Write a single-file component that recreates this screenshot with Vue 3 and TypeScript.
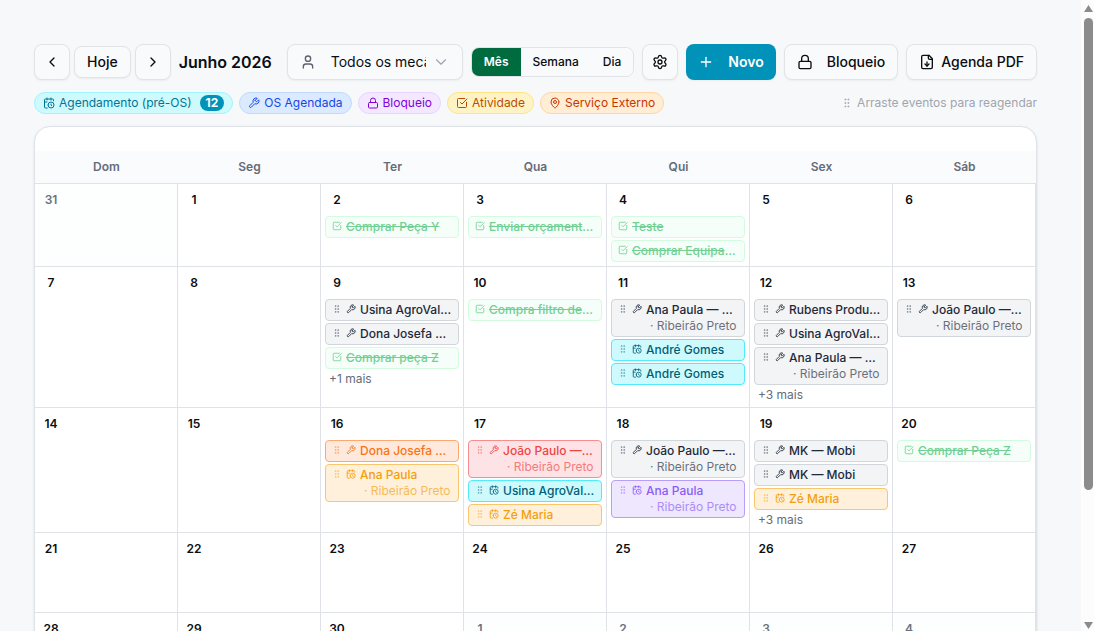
<script setup lang="ts">
import { computed, defineComponent, h, ref } from 'vue'

type IconName =
  | 'left' | 'right' | 'down' | 'user' | 'settings' | 'plus' | 'lock'
  | 'file' | 'calendar' | 'wrench' | 'check' | 'pin' | 'grip'

const paths: Record<IconName, string[]> = {
  left: ['m15 18-6-6 6-6'],
  right: ['m9 18 6-6-6-6'],
  down: ['m6 9 6 6 6-6'],
  user: ['M19 21v-2a4 4 0 0 0-4-4H9a4 4 0 0 0-4 4v2', 'M8 7a4 4 0 1 0 8 0a4 4 0 1 0-8 0'],
  settings: [
    'M9.671 4.136a2.34 2.34 0 0 1 4.659 0 2.34 2.34 0 0 0 3.319 1.915 2.34 2.34 0 0 1 2.33 4.033 2.34 2.34 0 0 0 0 3.831 2.34 2.34 0 0 1-2.33 4.033 2.34 2.34 0 0 0-3.319 1.915 2.34 2.34 0 0 1-4.659 0 2.34 2.34 0 0 0-3.32-1.915 2.34 2.34 0 0 1-2.33-4.033 2.34 2.34 0 0 0 0-3.831A2.34 2.34 0 0 1 6.35 6.051a2.34 2.34 0 0 0 3.319-1.915',
    'M9 12a3 3 0 1 0 6 0a3 3 0 1 0-6 0',
  ],
  plus: ['M5 12h14', 'M12 5v14'],
  lock: ['M5 11h14a2 2 0 0 1 2 2v7a2 2 0 0 1-2 2H5a2 2 0 0 1-2-2v-7a2 2 0 0 1 2-2z', 'M7 11V7a5 5 0 0 1 10 0v4'],
  file: ['M15 2H6a2 2 0 0 0-2 2v16a2 2 0 0 0 2 2h12a2 2 0 0 0 2-2V7Z', 'M14 2v4a2 2 0 0 0 2 2h4', 'M12 18v-6', 'm9 15 3 3 3-3'],
  calendar: ['M21 7.5V6a2 2 0 0 0-2-2H5a2 2 0 0 0-2 2v14a2 2 0 0 0 2 2h3.5', 'M16 2v4', 'M8 2v4', 'M3 10h5', 'M17.5 17.5 16 16.3V14', 'M10 16a6 6 0 1 0 12 0a6 6 0 1 0-12 0'],
  wrench: ['M14.7 6.3a1 1 0 0 0 0 1.4l1.6 1.6a1 1 0 0 0 1.4 0l3.77-3.77a6 6 0 0 1-7.94 7.94l-6.91 6.91a2.12 2.12 0 0 1-3-3l6.91-6.91a6 6 0 0 1 7.94-7.94l-3.76 3.76z'],
  check: ['M21 10.5V19a2 2 0 0 1-2 2H5a2 2 0 0 1-2-2V5a2 2 0 0 1 2-2h12.5', 'm9 11 3 3L22 4'],
  pin: ['M20 10c0 4.993-5.539 10.193-7.399 11.799a1 1 0 0 1-1.202 0C9.539 20.193 4 14.993 4 10a8 8 0 0 1 16 0', 'M9 10a3 3 0 1 0 6 0a3 3 0 1 0-6 0'],
  grip: [5, 12, 19].flatMap((y) => [9, 15].map((x) => `M${x - 1} ${y}a1 1 0 1 0 2 0a1 1 0 1 0-2 0`)),
}

const Icon = defineComponent({
  props: { name: { type: String, required: true }, size: { type: Number, default: 16 }, stroke: { type: Number, default: 2 } },
  setup(props) {
    return () =>
      h('svg', {
        width: props.size, height: props.size, viewBox: '0 0 24 24', fill: 'none', stroke: 'currentColor',
        'stroke-width': props.stroke, 'stroke-linecap': 'round', 'stroke-linejoin': 'round', 'aria-hidden': 'true',
      }, paths[props.name as IconName].map((d) => h('path', { d })))
  },
})

type Tone = 'gray' | 'cyan' | 'green' | 'orange' | 'amber' | 'red' | 'violet'
interface CalEvent { title: string; icon: IconName; tone: Tone; city?: string }
interface Day { label: number; outside?: boolean; events: CalEvent[]; more?: number }

const city = 'Ribeirão Preto'
const task = (title: string): CalEvent => ({ title, icon: 'check', tone: 'green' })
const order = (title: string, tone: Tone = 'gray', place?: string): CalEvent => ({ title, icon: 'wrench', tone, city: place })
const booking = (title: string, tone: Tone, place?: string): CalEvent => ({ title, icon: 'calendar', tone, city: place })

const events: Record<number, CalEvent[]> = {
  2: [task('Comprar Peça Y')],
  3: [task('Enviar orçamento cliente')],
  4: [task('Teste'), task('Comprar Equipamento')],
  9: [order('Usina AgroVale — Trator'), order('Dona Josefa — Gol'), task('Comprar peça Z')],
  10: [task('Compra filtro de óleo')],
  11: [order('Ana Paula — Onix', 'gray', city), booking('André Gomes', 'cyan'), booking('André Gomes', 'cyan')],
  12: [order('Rubens Produtor — Hilux'), order('Usina AgroVale — Trator'), order('Ana Paula — Onix', 'gray', city)],
  13: [order('João Paulo — Strada', 'gray', city)],
  16: [order('Dona Josefa — Gol', 'orange'), booking('Ana Paula', 'amber', city)],
  17: [order('João Paulo — Strada', 'red', city), booking('Usina AgroVale — Trator', 'cyan'), booking('Zé Maria', 'amber')],
  18: [order('João Paulo — Strada', 'gray', city), booking('Ana Paula', 'violet', city)],
  19: [order('MK — Mobi'), order('MK — Mobi'), booking('Zé Maria', 'amber')],
  20: [task('Comprar Peça Z')],
}
const hidden: Record<number, number> = { 9: 1, 12: 3, 19: 3 }

const weekdays = ['Dom', 'Seg', 'Ter', 'Qua', 'Qui', 'Sex', 'Sáb']
const weeks = computed<Day[][]>(() =>
  Array.from({ length: 5 }, (_, w) =>
    Array.from({ length: 7 }, (_, d) => {
      const n = w * 7 + d
      if (n === 0) return { label: 31, outside: true, events: [] }
      if (n > 30) return { label: n - 30, outside: true, events: [] }
      return { label: n, events: events[n] ?? [], more: hidden[n] }
    }),
  ),
)

const views = ['Mês', 'Semana', 'Dia']
const view = ref('Mês')
const legend: { label: string; icon: IconName; tone: string; count?: number }[] = [
  { label: 'Agendamento (pré-OS)', icon: 'calendar', tone: 'cyan', count: 12 },
  { label: 'OS Agendada', icon: 'wrench', tone: 'blue' },
  { label: 'Bloqueio', icon: 'lock', tone: 'purple' },
  { label: 'Atividade', icon: 'check', tone: 'yellow' },
  { label: 'Serviço Externo', icon: 'pin', tone: 'orange' },
]
</script>

<template>
  <div class="shell">
    <main class="page">
      <header class="toolbar">
        <div class="nav">
          <button class="btn square" type="button" aria-label="Anterior"><Icon name="left" /></button>
          <button class="btn today" type="button">Hoje</button>
          <button class="btn square" type="button" aria-label="Próximo"><Icon name="right" /></button>
        </div>
        <h1 class="title">Junho 2026</h1>
        <div class="picker">
          <Icon name="user" class="muted" />
          <select class="mechanic" aria-label="Mecânico"><option>Todos os mecânicos</option></select>
          <Icon name="down" class="faint" :size="18" :stroke="1.5" />
        </div>
        <div class="views" role="group" aria-label="Visualização">
          <button v-for="v in views" :key="v" type="button" class="view" :class="{ active: v === view }" @click="view = v">{{ v }}</button>
        </div>
        <button class="btn square" type="button" aria-label="Configurações"><Icon name="settings" /></button>
        <button class="btn wide primary" type="button"><Icon name="plus" :stroke="2" />Novo</button>
        <button class="btn wide" type="button"><Icon name="lock" :stroke="2" />Bloqueio</button>
        <button class="btn export" type="button"><Icon name="file" />Agenda PDF</button>
      </header>

      <div class="legend">
        <span v-for="item in legend" :key="item.label" class="chip" :class="item.tone">
          <Icon :name="item.icon" :size="12" />{{ item.label }}
          <b v-if="item.count" class="count">{{ item.count }}</b>
        </span>
        <span class="hint"><Icon name="grip" :size="12" />Arraste eventos para reagendar</span>
      </div>

      <section class="card">
        <table class="calendar">
          <thead>
            <tr><th v-for="d in weekdays" :key="d" scope="col">{{ d }}</th></tr>
          </thead>
          <tbody>
            <tr v-for="(week, w) in weeks" :key="w">
              <td v-for="(day, d) in week" :key="d" :class="{ outside: day.outside }">
                <span class="num">{{ day.label }}</span>
                <div class="stack">
                  <div v-for="(e, i) in day.events" :key="i" class="event" :class="e.tone">
                    <Icon v-if="e.tone !== 'green'" name="grip" :size="10" class="grip" />
                    <Icon :name="e.icon" :size="10" class="kind" />
                    <div class="text">
                      <div class="name">{{ e.title }}</div>
                      <div v-if="e.city" class="city">· {{ e.city }}</div>
                    </div>
                  </div>
                  <button v-if="day.more" type="button" class="more">+{{ day.more }} mais</button>
                </div>
              </td>
            </tr>
          </tbody>
        </table>
      </section>
    </main>

    <div class="scrollbar" aria-hidden="true">
      <svg class="arrow" width="9" height="7" viewBox="0 0 9 7"><path d="M4.5 0 9 7H0z" /></svg>
      <div class="track"><div class="thumb"></div></div>
      <svg class="arrow" width="9" height="7" viewBox="0 0 9 7"><path d="M4.5 7 9 0H0z" /></svg>
    </div>
  </div>
</template>

<style>
body { background: #f7f8fa; }
</style>

<style scoped>
* { box-sizing: border-box; }
.shell {
  display: grid;
  grid-template-columns: minmax(0, 1fr) 13px;
  height: 100vh;
  overflow: hidden;
  background: #f7f8fa;
  color: #0a0d12;
  font-family: Inter, "Liberation Sans", sans-serif;
  font-size: 12px;
  line-height: 16px;
}
svg { display: block; flex: none; }
button, select { font: inherit; color: inherit; margin: 0; }
.page { padding: 44px 44px 0 34px; overflow: hidden; }

.toolbar { display: flex; align-items: center; gap: 8px; font-size: 14px; line-height: 20px; }
.nav { display: flex; align-items: center; gap: 4px; }
.btn {
  display: flex;
  flex: none;
  align-items: center;
  justify-content: center;
  height: 36px;
  padding: 0 12px;
  border: 1px solid #e0e3e7;
  border-radius: 8px;
  background: #f9fafb;
  font-weight: 500;
  white-space: nowrap;
  box-shadow: 0 1px 2px rgba(0, 0, 0, 0.05);
}
.square { width: 36px; padding: 0; }
.today { height: 32px; }
.wide { gap: 14px; }
.export { gap: 6px; }
.primary { border: 0; background: #0092b8; color: #fff; font-weight: 600; }
.title { margin: 0; font-size: 16px; line-height: 24px; font-weight: 600; white-space: nowrap; }
.picker {
  display: flex;
  align-items: center;
  flex: none;
  width: 176px;
  height: 36px;
  margin-left: auto;
  padding: 0 12px;
  border: 1px solid #e0e3e7;
  border-radius: 8px;
  background: #f9fafb;
  box-shadow: 0 1px 2px rgba(0, 0, 0, 0.05);
}
.mechanic {
  flex: 1;
  min-width: 0;
  margin: 0 6px 0 15px;
  padding: 0;
  border: 0;
  background: none;
  appearance: none;
}
.muted { color: #5b626d; }
.faint { color: #9ca3af; }
.views {
  display: flex;
  flex: none;
  height: 30px;
  border: 1px solid #e0e3e7;
  border-radius: 8px;
  overflow: hidden;
  font-size: 12px;
  font-weight: 500;
}
.view { border: 0; padding: 0 12px; background: #f9fafb; }
.view.active { background: #006b3f; color: #fff; font-weight: 600; }

.legend { display: flex; align-items: center; gap: 6px; margin: 12px 0; }
.chip {
  display: flex;
  align-items: center;
  gap: 4px;
  height: 22px;
  padding: 0 8px;
  border: 1px solid;
  border-radius: 11px;
  white-space: nowrap;
}
.count {
  margin-left: 4px;
  padding: 0 6px;
  border-radius: 8px;
  background: #0092b8;
  color: #fff;
  font-weight: 700;
}
.chip.cyan { background: #cefafe; border-color: #a2f4fd; color: #007595; }
.chip.blue { background: #dbeafe; border-color: #bedbff; color: #1447e6; }
.chip.purple { background: #f3e8ff; border-color: #e9d4ff; color: #8200db; }
.chip.yellow { background: #fef3c6; border-color: #fee685; color: #bb4d00; }
.chip.orange { background: #ffedd4; border-color: #ffd6a7; color: #ca3500; }
.hint { display: flex; align-items: center; gap: 4px; margin-left: auto; color: #a0a5ae; white-space: nowrap; }

.card {
  padding-top: 24px;
  border: 1px solid #dfe2e6;
  border-radius: 16px;
  overflow: hidden;
  background: #fff;
  box-shadow: 0 1px 3px rgba(0, 0, 0, 0.1);
}
.calendar { width: 100%; table-layout: fixed; border-collapse: separate; border-spacing: 0; }
th {
  height: 33px;
  padding: 0;
  border-bottom: 1px solid #dfe2e6;
  background: #fafbfd;
  color: #656c78;
  font-weight: 600;
}
td {
  height: 80px;
  padding: 4px;
  border-right: 1px solid #dfe2e6;
  border-bottom: 1px solid #dfe2e6;
  vertical-align: top;
}
.outside { background: #fdfefe; }
.num { display: block; width: 24px; line-height: 24px; text-align: center; font-weight: 600; }
.outside .num { color: #6b7280; }
.stack { display: flex; flex-direction: column; gap: 2px; margin-top: 4px; }
.event {
  display: flex;
  gap: 4px;
  padding: 2px 6px;
  border: 1px solid;
  border-radius: 4px;
  font-weight: 500;
}
.grip, .kind { margin-top: 2px; }
.grip { opacity: 0.6; }
.text { flex: 1; min-width: 0; }
.name { overflow: hidden; text-overflow: ellipsis; white-space: nowrap; }
.city { padding-left: 4px; font-weight: 400; opacity: 0.65; white-space: nowrap; }
.event.gray { background: #f3f4f6; border-color: #d1d5dc; color: #1e2939; }
.event.cyan { background: #cefafe; border-color: #53eafd; color: #005f78; }
.event.green { background: #f6fef9; border-color: #d3fbdf; color: #72d095; }
.event.green .name { text-decoration: line-through; }
.event.orange { background: #fee9dc; border-color: #fba972; color: #f97316; }
.event.amber { background: #fef0da; border-color: #f9c56d; color: #f59e0b; }
.event.red { background: #fde3e5; border-color: #f58f8f; color: #ef4444; }
.event.violet { background: #eee7fe; border-color: #b99dfa; color: #8b5cf6; }
.more { align-self: flex-start; padding: 0 4px; border: 0; background: none; color: #656c78; }

.scrollbar {
  display: flex;
  flex-direction: column;
  align-items: center;
  gap: 6px;
  padding: 5px 1px 2px 2px;
  background: #fcfcfc;
}
.arrow { fill: #8b8b8b; }
.track { flex: 1; width: 9px; }
.thumb { height: 79%; border-radius: 5px; background: #8b8b8b; }
</style>
